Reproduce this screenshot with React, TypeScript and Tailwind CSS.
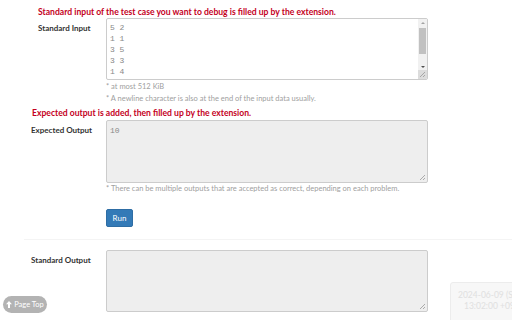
import React from "react";

const ResizeGrip: React.FC = () => (
  <svg
    className="absolute right-[1px] bottom-[1px]"
    width="7"
    height="7"
    viewBox="0 0 7 7"
  >
    <path d="M6 1 L1 6 M6 4 L4 6" stroke="#999" strokeWidth="0.8" />
  </svg>
);

const Label: React.FC<{ text: string; pl: string }> = ({ text, pl }) => (
  <div
    className={`w-[106px] shrink-0 pt-[5px] text-[8px] leading-[10px] font-bold text-[#333] ${pl}`}
  >
    {text}
  </div>
);

const App: React.FC = () => {
  const inputLines = ["5 2", "1 1", "3 5", "3 3", "1 4"];

  return (
    <div className="relative w-[512px] h-[320px] overflow-hidden bg-white font-['Lato','Noto_Sans',sans-serif]">
      <div className="pt-[6px] pl-[38px] text-[8.6px] leading-[12px] font-bold text-[#c4001d] whitespace-nowrap">
        Standard input of the test case you want to debug is filled up by the
        extension.
      </div>

      <div className="flex">
        <Label text="Standard Input" pl="pl-[38px]" />
        <div className="relative w-[322px] h-[62px] border border-[#ccc] rounded-[2px] bg-white overflow-hidden">
          <div className="pt-[3px] pl-[3px] font-['Liberation_Mono',monospace] text-[8px] leading-[11px] text-[#888]">
            {inputLines.map((line) => (
              <div key={line}>{line}</div>
            ))}
          </div>
          <div className="absolute right-0 top-0 w-[9px] h-full bg-[#f1f1f1] flex flex-col items-center">
            <div className="mt-[3px] w-0 h-0 border-l-[2px] border-r-[2px] border-b-[2px] border-l-transparent border-r-transparent border-b-[#a3a3a3]" />
            <div className="mt-[4px] w-[7px] h-[26px] bg-[#c1c1c1]" />
            <div className="mt-[12px] w-0 h-0 border-l-[2px] border-r-[2px] border-t-[2px] border-l-transparent border-r-transparent border-t-[#505050]" />
            <div className="mt-auto w-[9px] h-[9px] bg-[#dcdcdc]" />
          </div>
          <ResizeGrip />
        </div>
      </div>

      <div className="pl-[106px] mt-[1px] text-[7.5px] leading-[12px] text-[#a0a0a0]">
        * at most 512 KiB
      </div>
      <div className="pl-[106px] text-[7.5px] leading-[12px] text-[#a0a0a0]">
        * A newline character is also at the end of the input data usually.
      </div>

      <div className="mt-[2px] pl-[32px] text-[8.6px] leading-[12px] font-bold text-[#c4001d] whitespace-nowrap">
        Expected output is added, then filled up by the extension.
      </div>

      <div className="flex mt-[1px]">
        <Label text="Expected Output" pl="pl-[31px]" />
        <div className="relative w-[322px] h-[63px] border border-[#ccc] rounded-[2px] bg-[#eee]">
          <div className="pt-[4px] pl-[3px] font-['Liberation_Mono',monospace] text-[8px] leading-[11px] text-[#888]">
            10
          </div>
          <ResizeGrip />
        </div>
      </div>

      <div className="pl-[106px] text-[7.5px] leading-[12px] text-[#a0a0a0]">
        * There can be multiple outputs that are accepted as correct,
        depending on each problem.
      </div>

      <div className="flex pl-[106px] mt-[14px]">
        <button className="w-[27px] h-[18px] bg-[#337ab7] border border-[#2e6da4] rounded-[2px] text-white text-[8px] leading-[16px]">
          Run
        </button>
      </div>

      <div className="ml-[24px] mt-[12px] border-t border-[#f4f4f4]" />

      <div className="flex mt-[10px]">
        <Label text="Standard Output" pl="pl-[31px]" />
        <div className="relative w-[322px] h-[62px] border border-[#ccc] rounded-[2px] bg-[#eee]">
          <ResizeGrip />
        </div>
      </div>

      <button className="absolute left-[3px] top-[296px] w-[44px] h-[17px] rounded-full bg-[#b3b3b3] text-white text-[7.5px] leading-[17px] flex items-center justify-center gap-[2px]">
        <svg width="6" height="7" viewBox="0 0 6 7">
          <path d="M3 0 L6 3.2 L4 3.2 L4 7 L2 7 L2 3.2 L0 3.2 Z" fill="white" />
        </svg>
        Page Top
      </button>

      <div className="absolute left-[450px] top-[282px] w-[80px] h-[44px] rounded-[3px] border border-[#ececec] bg-[#f7f7f7] pt-[7px] pl-[7px] text-[8.5px] leading-[11px] text-[#e0e0e0] whitespace-nowrap">
        <div>2024-06-09 (Sun)</div>
        <div className="pl-[6px]">13:02:00 +0900</div>
      </div>
    </div>
  );
};

export default App;
